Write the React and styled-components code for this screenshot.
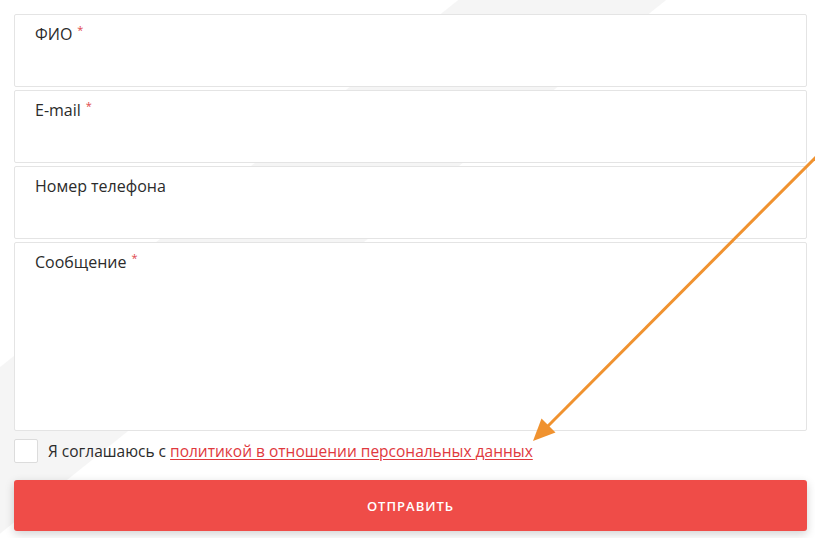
import React from "react";
import styled, { createGlobalStyle } from "styled-components";

const GlobalStyle = createGlobalStyle`
  html, body { margin: 0; padding: 0; background: #fff; }
  body {
    font-family: "Open Sans", "Noto Sans", sans-serif;
    color: #2b2b2b;
  }
  * { box-sizing: border-box; }
`;

const Page = styled.div`
  position: relative;
  width: 815px;
  height: 538px;
  overflow: hidden;
  background-color: #fff;
  background-image: linear-gradient(
    141.3deg,
    #ffffff 286px,
    #f5f5f5 287px,
    #f5f5f5 416px,
    #ffffff 417px
  );
`;

const Form = styled.form`
  display: flex;
  flex-direction: column;
  padding: 14px 8px 0 14px;
`;

const Fields = styled.div`
  display: flex;
  flex-direction: column;
  gap: 3px;
`;

const Field = styled.label`
  display: flex;
  flex-direction: column;
  height: ${(p) => p.$h}px;
  padding: 8px 20px 0 20px;
  border: 1px solid #e4e4e4;
  border-radius: 2px;
  background: #fff;
`;

const LabelText = styled.span`
  font-size: 16px;
  line-height: 22px;
  color: #2b2b2b;
`;

const Star = styled.sup`
  color: #e0474c;
  font-size: 11px;
  margin-left: 5px;
  vertical-align: 6px;
  line-height: 0;
`;

const Input = styled.input`
  border: none;
  outline: none;
  background: transparent;
  font: inherit;
  font-size: 16px;
  padding: 0;
  height: 24px;
`;

const Area = styled.textarea`
  flex: 1;
  border: none;
  outline: none;
  resize: none;
  background: transparent;
  font: inherit;
  font-size: 16px;
  padding: 0;
`;

const Agree = styled.div`
  display: flex;
  align-items: center;
  gap: 10px;
  margin-top: 8px;
  height: 24px;
`;

const Box = styled.span`
  width: 24px;
  height: 24px;
  border: 1px solid #dcdcdc;
  border-radius: 2px;
  background: #fff;
  flex: none;
`;

const AgreeText = styled.span`
  font-size: 15.5px;
  color: #2b2b2b;
  line-height: 20px;
`;

const Link = styled.a`
  color: #e0393e;
  text-decoration: underline;
  text-underline-offset: 2px;
  text-decoration-thickness: 1px;
`;

const Button = styled.button`
  margin-top: 17px;
  height: 51px;
  border: none;
  border-radius: 3px;
  background: #ef4c48;
  color: #fff;
  font-family: "Open Sans", "Noto Sans", sans-serif;
  font-size: 13px;
  font-weight: 600;
  letter-spacing: 1px;
  box-shadow: 0 3px 10px rgba(0, 0, 0, 0.18);
  cursor: pointer;
`;

const ArrowLayer = styled.svg`
  position: absolute;
  left: 0;
  top: 0;
  pointer-events: none;
`;

export default function App() {
  return (
    <Page>
      <GlobalStyle />
      <Form onSubmit={(e) => e.preventDefault()}>
        <Fields>
          <Field $h={73}>
            <LabelText>ФИО<Star>*</Star></LabelText>
            <Input type="text" />
          </Field>
          <Field $h={73}>
            <LabelText>E-mail<Star>*</Star></LabelText>
            <Input type="email" />
          </Field>
          <Field $h={73}>
            <LabelText>Номер телефона</LabelText>
            <Input type="tel" />
          </Field>
          <Field $h={189}>
            <LabelText>Сообщение<Star>*</Star></LabelText>
            <Area />
          </Field>
        </Fields>
        <Agree>
          <Box />
          <AgreeText>
            Я соглашаюсь с <Link href="#">политикой в отношении персональных данных</Link>
          </AgreeText>
        </Agree>
        <Button type="submit">ОТПРАВИТЬ</Button>
      </Form>
      <ArrowLayer width="815" height="538" viewBox="0 0 815 538">
        <line x1="818" y1="155" x2="546" y2="428" stroke="#f0922f" strokeWidth="3" />
        <polygon points="533,441 541.5,418.5 555.5,432.5" fill="#f0922f" />
      </ArrowLayer>
    </Page>
  );
}
